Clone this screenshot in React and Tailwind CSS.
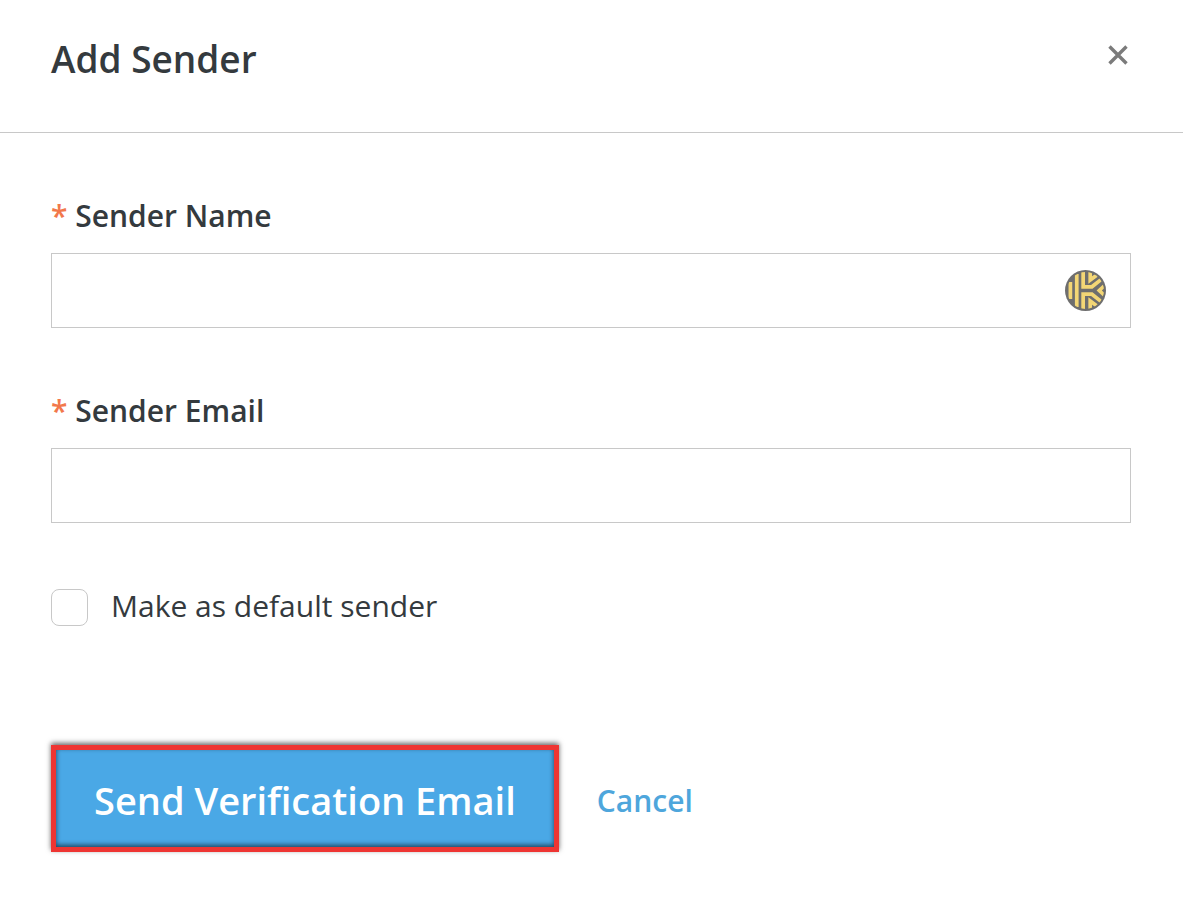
import React from 'react';

const KeeperIcon = () => (
  <svg viewBox="0 0 122 122" className="h-[41px] w-[41px]" fill="none" stroke="#f3d675" strokeWidth="11" aria-hidden="true">
    <clipPath id="keeper-clip">
      <circle cx="61" cy="61" r="55" />
    </clipPath>
    <circle cx="61" cy="61" r="61" fill="#6e6e6e" stroke="none" />
    <g clipPath="url(#keeper-clip)">
      <path d="M16 36v50" />
      <path d="M35 12v98" />
      <path d="M54 0v50h26l28-22" />
      <path d="M54 122V72h26l28 22" />
      <path d="M75 0v30l20-15" />
      <path d="M75 122V92l20 15" />
      <path d="M117 47l-15 14 15 14" />
    </g>
  </svg>
);

const CloseIcon = () => (
  <svg viewBox="0 0 20 20" className="h-5 w-5" stroke="#7b7b7b" strokeWidth="3.4" aria-hidden="true">
    <path d="M1.5 1.5l17 17M18.5 1.5l-17 17" />
  </svg>
);

const Field = ({ id, label, type, children }) => (
  <div>
    <label htmlFor={id} className="mb-[18px] block text-[30px] leading-[38px] font-semibold">
      <span className="text-[#f2784b]">*</span> {label}
    </label>
    <div className="relative">
      <input id={id} type={type} className="block h-[75px] w-full border border-[#c8c8c8] bg-white px-5 text-[30px] outline-none" />
      {children}
    </div>
  </div>
);

const App = () => {
  return (
    <div className="min-h-screen bg-white font-['Open_Sans',sans-serif] text-[#343a3e]">
      <header className="flex items-start justify-between border-b border-[#c8c8c8] pt-8 pr-[55px] pb-[46px] pl-[51px]">
        <h1 className="text-[37px] leading-[54px] font-semibold">Add Sender</h1>
        <button type="button" aria-label="Close" className="mt-[13px]">
          <CloseIcon />
        </button>
      </header>

      <form className="px-[51px] pt-16">
        <div className="flex flex-col gap-16 pr-px">
          <Field id="sender-name" label="Sender Name" type="text">
            <span className="absolute inset-y-0 right-[25px] flex items-center">
              <KeeperIcon />
            </span>
          </Field>
          <Field id="sender-email" label="Sender Email" type="email" />
        </div>

        <div className="mt-16 flex items-center gap-[23px]">
          <input
            id="default-sender"
            type="checkbox"
            className="h-[37px] w-[37px] appearance-none rounded-lg border border-[#c8c8c8] bg-white checked:bg-[#4aa8e6]"
          />
          <label htmlFor="default-sender" className="pb-0.5 text-[30px] leading-[38px]">Make as default sender</label>
        </div>

        <div className="mt-[118px] flex items-center gap-[38px] pb-12">
          <button
            type="submit"
            className="border-[5px] border-[#ee3532] bg-[#4aa8e6] px-[38px] pt-[25px] pb-[22px] text-[38px] leading-[50px] font-semibold text-white shadow-[0_-2px_5px_rgba(0,0,0,0.6),inset_0_-2px_5px_rgba(0,0,0,0.6)]"
          >
            Send Verification Email
          </button>
          <button type="button" className="pt-1 text-[30px] leading-10 font-semibold text-[#4ea6dc]">Cancel</button>
        </div>
      </form>
    </div>
  );
};

export default App;
